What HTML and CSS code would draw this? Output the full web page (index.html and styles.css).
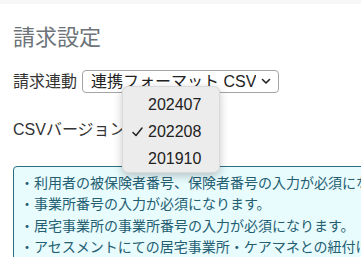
FILE: index.html
```html
<!DOCTYPE html>
<html lang="ja">
<head>
    <meta charset="UTF-8">
    <meta name="viewport" content="width=device-width, initial-scale=1.0">
    <title>請求設定</title>
    <link rel="stylesheet" href="styles.css">
</head>
<body>
    <div class="topbar"></div>
    <div class="container">
        <h2 class="title">請求設定</h2>

        <div class="form-row">
            <label for="billingLink">請求連動</label>
            <span class="select-wrap">
                <select id="billingLink" class="select-main">
                    <option>連携フォーマット CSV</option>
                </select>
                <svg class="chevron" width="10" height="7" viewBox="0 0 10 7"><polyline points="1.5,1.5 5,5 8.5,1.5" fill="none" stroke="#222" stroke-width="1.6" stroke-linecap="round" stroke-linejoin="round"/></svg>
            </span>
        </div>

        <div class="form-row">
            <label for="csvVersion">CSVバージョン</label>
            <span class="select-wrap">
                <select id="csvVersion" class="select-version">
                    <option>202407</option>
                    <option selected>202208</option>
                    <option>201910</option>
                </select>
            </span>
        </div>

        <!-- 開いている選択リスト -->
        <div class="popup">
            <div class="popup-item">202407</div>
            <div class="popup-item">
                <svg class="check" width="11" height="10" viewBox="0 0 11 10"><polyline points="1,5.5 4,8.5 10,1" fill="none" stroke="#222" stroke-width="1.5" stroke-linecap="round" stroke-linejoin="round"/></svg>
                202208
            </div>
            <div class="popup-item">201910</div>
        </div>

        <div class="info-box">
            <div>・利用者の被保険者番号、保険者番号の入力が必須になります。</div>
            <div>・事業所番号の入力が必須になります。</div>
            <div>・居宅事業所の事業所番号の入力が必須になります。</div>
            <div>・アセスメントにての居宅事業所・ケアマネとの紐付けが必須になります。</div>
        </div>
    </div>
</body>
</html>
```

FILE: styles.css
```css
html, body {
    margin: 0;
    padding: 0;
    background: #fff;
    overflow: hidden;
}
body {
    font-family: "Liberation Sans", "Noto Sans CJK JP", sans-serif;
    color: #333;
    font-size: 16px;
}
.topbar {
    height: 4px;
    background: #f7f7f7;
}
.container {
    position: relative;
    padding-left: 13px;
    padding-top: 18px;
    width: 600px;
}
.title {
    margin: 0 0 16px;
    font-size: 22px;
    line-height: 32px;
    font-weight: normal;
    color: #6c7379;
}
.form-row {
    display: flex;
    align-items: center;
    gap: 5px;
    height: 23px;
    margin-bottom: 25px;
}
.form-row label {
    line-height: 23px;
}
.select-wrap {
    position: relative;
    display: inline-block;
}
select {
    appearance: none;
    -webkit-appearance: none;
    font-family: inherit;
    font-size: 16px;
    color: #222;
    background: #fff;
    border: 1px solid #a5a5a5;
    border-radius: 4px;
    height: 23px;
    padding: 0 22px 0 8px;
    line-height: 21px;
}
.select-main {
    width: 197px;
}
.select-version {
    width: 80px;
}
.chevron {
    position: absolute;
    right: 8px;
    top: 8px;
}
.popup {
    position: absolute;
    left: 122px;
    top: 82px;
    width: 98px;
    padding: 4px 0 2px;
    background: #ececec;
    border: 1px solid rgba(0, 0, 0, 0.08);
    border-radius: 6px;
    box-shadow: 0 3px 10px rgba(0, 0, 0, 0.22);
    box-sizing: border-box;
    height: 87px;
}
.popup-item {
    position: relative;
    height: 27px;
    line-height: 27px;
    padding-left: 25px;
    color: #222;
    font-size: 16px;
}
.check {
    position: absolute;
    left: 9px;
    top: 9px;
}
.info-box {
    margin-top: 23px;
    width: 540px;
    white-space: nowrap;
    background: #e8fbfd;
    border: 1px solid #2c6f82;
    border-radius: 4px;
    padding: 6px 6px 8px;
    font-size: 14px;
    line-height: 21.4px;
    color: #235e72;
}
```
